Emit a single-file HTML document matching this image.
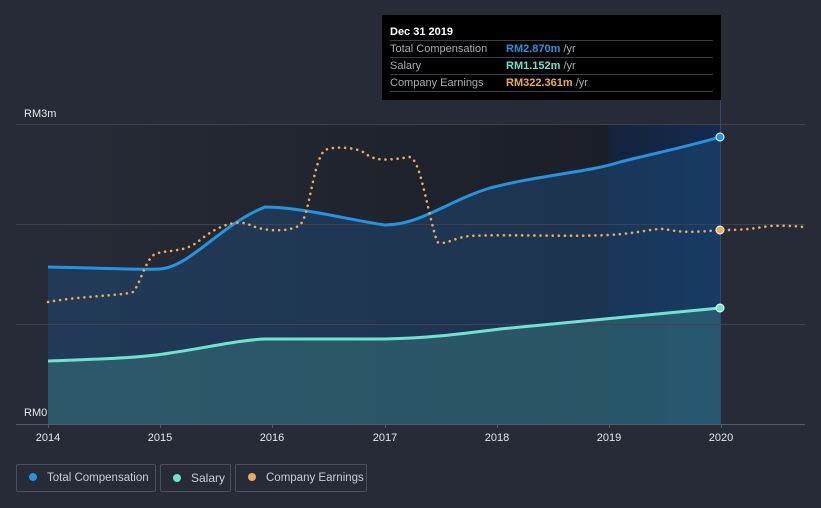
<!DOCTYPE html>
<html><head><style>
html,body{margin:0;background:#262b37;width:821px;height:508px;overflow:hidden;font-family:"Liberation Sans",sans-serif;}
.lg{position:absolute;top:464px;height:28px;border:1px solid #4a4f5c;border-radius:2px;color:#c9ccd3;font-size:12px;line-height:26px;box-sizing:border-box;white-space:nowrap;}
.dot{display:inline-block;width:8px;height:8px;border-radius:50%;margin:0 10px 0 12px;}
</style></head><body>
<svg width="821" height="508" style="position:absolute;left:0;top:0">
<defs>
<linearGradient id="bgd" x1="0" x2="1" y1="0" y2="0"><stop offset="0" stop-color="#262b37"/><stop offset="1" stop-color="#181b22"/></linearGradient>
<linearGradient id="hl" x1="0" x2="1"><stop offset="0" stop-color="#15233a"/><stop offset="1" stop-color="#132a4f"/></linearGradient>
</defs>
<rect x="48" y="124" width="560" height="300" fill="url(#bgd)" opacity="0.8"/>
<rect x="608" y="124" width="113" height="300" fill="url(#hl)"/>
<path d="M48,267 C100,268 140,270 160,269 C190,267 220,225 265,207 C300,207 350,220 385,225 C420,225 450,200 490,188 C540,175 590,172 620,162 C660,152 690,146 720,137 L720,424 L48,424Z" fill="#1e4a78" opacity="0.5"/>
<path d="M48,361 C100,359 140,358 170,353 C210,347 240,340 265,339 L385,339 C430,338 460,334 500,329 L720,308 L720,424 L48,424Z" fill="#3c7f80" opacity="0.45"/>
<g stroke="#3d424f" stroke-width="1">
<line x1="16" y1="124.5" x2="805" y2="124.5"/><line x1="16" y1="224.5" x2="805" y2="224.5"/><line x1="16" y1="324.5" x2="805" y2="324.5"/><line x1="16" y1="424.5" x2="805" y2="424.5" stroke="#555b68"/>
</g>
<line x1="720.5" y1="15" x2="720.5" y2="424" stroke="#2f4a6e"/>
<path d="M48,267 C100,268 140,270 160,269 C190,267 220,225 265,207 C300,207 350,220 385,225 C420,225 450,200 490,188 C540,175 590,172 620,162 C660,152 690,146 720,137" fill="none" stroke="#2394e0" stroke-width="3"/>
<path d="M48,361 C100,359 140,358 170,353 C210,347 240,340 265,339 L385,339 C430,338 460,334 500,329 L720,308" fill="none" stroke="#6ee4d0" stroke-width="3"/>
<path d="M48,302 C80,296 120,296 133,292 C140,285 145,260 155,254 C170,249 185,253 200,240 C215,228 235,218 250,225 C265,232 290,232 300,225 C310,215 313,160 325,150 C335,146 355,147 365,153 C375,162 390,160 410,157 C420,160 425,200 437,242 C445,246 455,237 470,236 C510,234 560,237 610,235 C640,233 655,228 665,229 C680,233 700,232 720,230 C750,230 755,228 770,226 C790,225 800,227 805,227" fill="none" stroke="#e9ad57" stroke-width="2.6" stroke-dasharray="0.1 6" stroke-linecap="round"/>
<circle cx="720" cy="137" r="4" fill="#2394e0" stroke="#fff" stroke-width="1"/>
<circle cx="720" cy="230" r="4" fill="#e9ad57" stroke="#fff" stroke-width="1"/>
<circle cx="720" cy="308" r="4" fill="#6ee4d0" stroke="#fff" stroke-width="1"/>
<g stroke="#555b68"><line x1="48.5" y1="424" x2="48.5" y2="428"/><line x1="160.5" y1="424" x2="160.5" y2="428"/><line x1="272.5" y1="424" x2="272.5" y2="428"/><line x1="385.5" y1="424" x2="385.5" y2="428"/><line x1="497.5" y1="424" x2="497.5" y2="428"/><line x1="609.5" y1="424" x2="609.5" y2="428"/><line x1="721.5" y1="424" x2="721.5" y2="428"/></g>
<g fill="#e6e8ec" font-size="11" text-anchor="middle">
<text x="48" y="441">2014</text><text x="160" y="441">2015</text><text x="272" y="441">2016</text><text x="385" y="441">2017</text><text x="497" y="441">2018</text><text x="609" y="441">2019</text><text x="721" y="441">2020</text>
</g>
<text x="24" y="117" fill="#e6e8ec" font-size="11">RM3m</text>
<text x="24" y="416" fill="#e6e8ec" font-size="11">RM0</text>
<rect x="382" y="15" width="339" height="85" fill="#000"/>
<text x="390" y="35" fill="#fff" font-size="11" font-weight="bold">Dec 31 2019</text>
<g stroke="#3a3d45"><line x1="390" y1="40.5" x2="713" y2="40.5"/><line x1="390" y1="57.5" x2="713" y2="57.5"/><line x1="390" y1="74.5" x2="713" y2="74.5"/><line x1="390" y1="91.5" x2="713" y2="91.5"/></g>
<g font-size="11"><text x="390" y="52" fill="#a9acb3">Total Compensation</text><text x="506" y="52" fill="#2394e0" font-weight="bold">RM2.870m <tspan fill="#a9acb3" font-weight="normal">/yr</tspan></text>
<text x="390" y="69" fill="#a9acb3">Salary</text><text x="506" y="69" fill="#6ee4d0" font-weight="bold">RM1.152m <tspan fill="#a9acb3" font-weight="normal">/yr</tspan></text>
<text x="390" y="86" fill="#a9acb3">Company Earnings</text><text x="506" y="86" fill="#e9ad57" font-weight="bold">RM322.361m <tspan fill="#a9acb3" font-weight="normal">/yr</tspan></text></g>
</svg>
<div class="lg" style="left:16px;width:140px;font-size:11.5px"><span class="dot" style="background:#2394e0"></span>Total Compensation</div>
<div class="lg" style="left:160px;width:71px"><span class="dot" style="background:#6ee4d0"></span>Salary</div>
<div class="lg" style="left:235px;width:132px;font-size:11.5px"><span class="dot" style="background:#e9ad57"></span>Company Earnings</div>
</body></html>
